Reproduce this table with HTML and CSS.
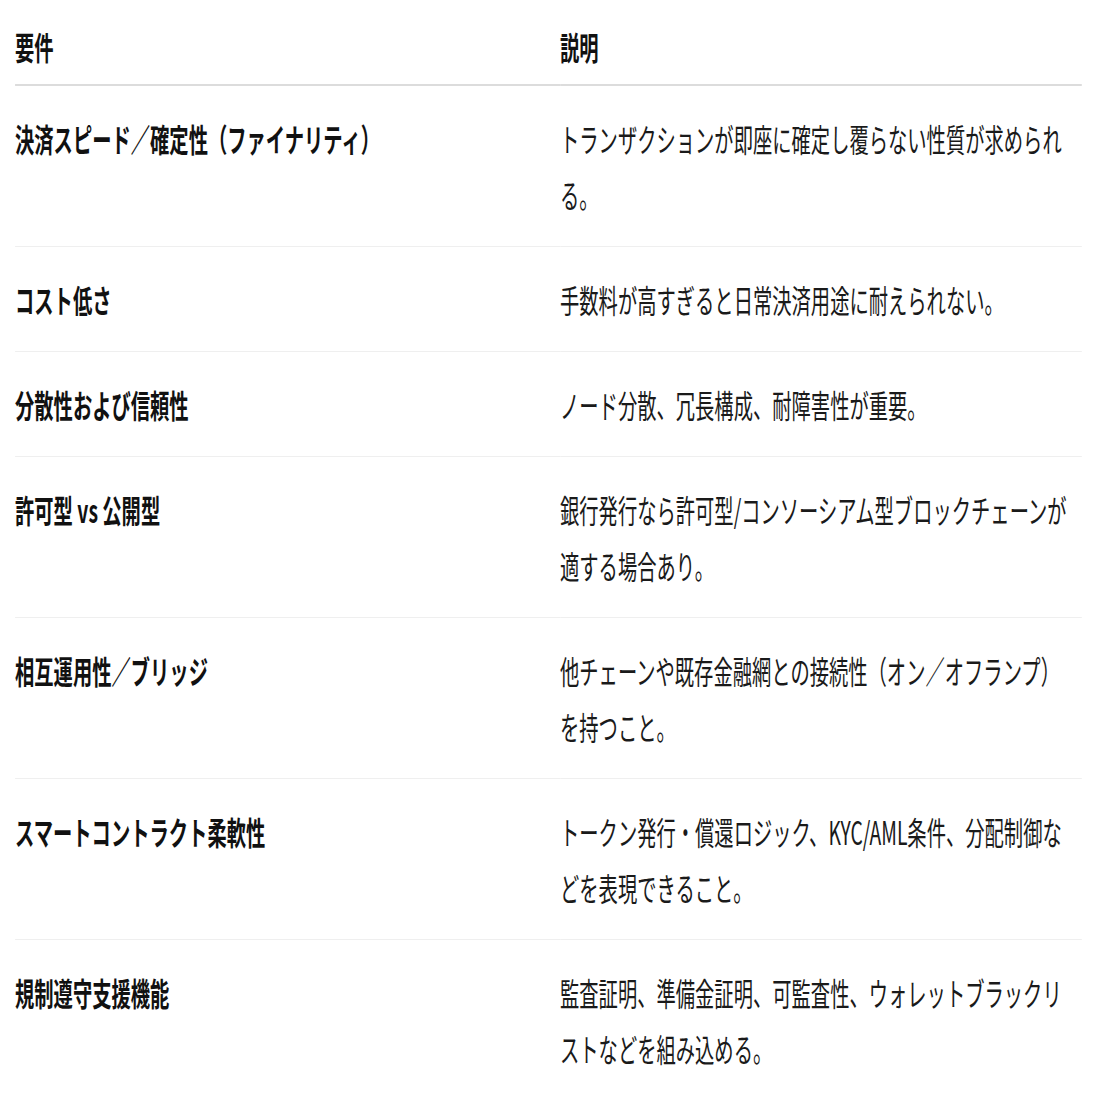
FILE: index.html
```html
<!DOCTYPE html>
<html lang="ja">
<head>
<meta charset="utf-8">
<title>要件と説明</title>
<link rel="stylesheet" href="styles.css">
</head>
<body>
<div class="page">
  <table class="req">
    <thead>
      <tr><th class="c1">要件</th><th class="c2">説明</th></tr>
    </thead>
    <tbody>
      <tr><td class="c1">決済スピード／確定性（ファイナリティ）</td><td class="c2">トランザクションが即座に確定し覆らない性質が求められる。</td></tr>
      <tr><td class="c1">コスト低さ</td><td class="c2">手数料が高すぎると日常決済用途に耐えられない。</td></tr>
      <tr><td class="c1">分散性および信頼性</td><td class="c2">ノード分散、冗長構成、耐障害性が重要。</td></tr>
      <tr><td class="c1">許可型 vs 公開型</td><td class="c2">銀行発行なら許可型/コンソーシアム型ブロックチェーンが適する場合あり。</td></tr>
      <tr><td class="c1">相互運用性／ブリッジ</td><td class="c2">他チェーンや既存金融網との接続性（オン／オフランプ）を持つこと。</td></tr>
      <tr><td class="c1">スマートコントラクト柔軟性</td><td class="c2">トークン発行・償還ロジック、KYC/AML条件、分配制御などを表現できること。</td></tr>
      <tr><td class="c1">規制遵守支援機能</td><td class="c2">監査証明、準備金証明、可監査性、ウォレットブラックリストなどを組み込める。</td></tr>
    </tbody>
  </table>
</div>
</body>
</html>
```

FILE: styles.css
```css
:root {
  --s: 0.603;
}
html, body {
  margin: 0;
  padding: 0;
  background: #ffffff;
  overflow-x: hidden;
}
.page {
  width: calc(1112px / var(--s));
  padding-left: calc(15px / var(--s));
  box-sizing: border-box;
  transform: scaleX(var(--s));
  transform-origin: 0 0;
}
.req {
  border-collapse: collapse;
  table-layout: fixed;
  width: calc(1067px / var(--s));
  font-family: "Noto Sans CJK JP", "Noto Sans", sans-serif;
  font-size: 32px;
  line-height: 56px;
  color: #111111;
}
.req .c1 {
  width: calc(545px / var(--s));
}
.req th,
.req td {
  text-align: left;
  vertical-align: top;
  padding: 24px 0;
}
.req th {
  font-weight: 700;
  padding: 18px 0 10px;
  border-bottom: 2px solid #dcdcdc;
}
.req td {
  border-bottom: 1px solid #efefef;
}
.req td.c2 {
  padding-right: calc(7px / var(--s));
}
.req tbody tr:last-child td {
  border-bottom: none;
}
.req td.c1 {
  font-weight: 700;
}
.req td.c2 {
  font-weight: 400;
  color: #1a1a1a;
}
```
